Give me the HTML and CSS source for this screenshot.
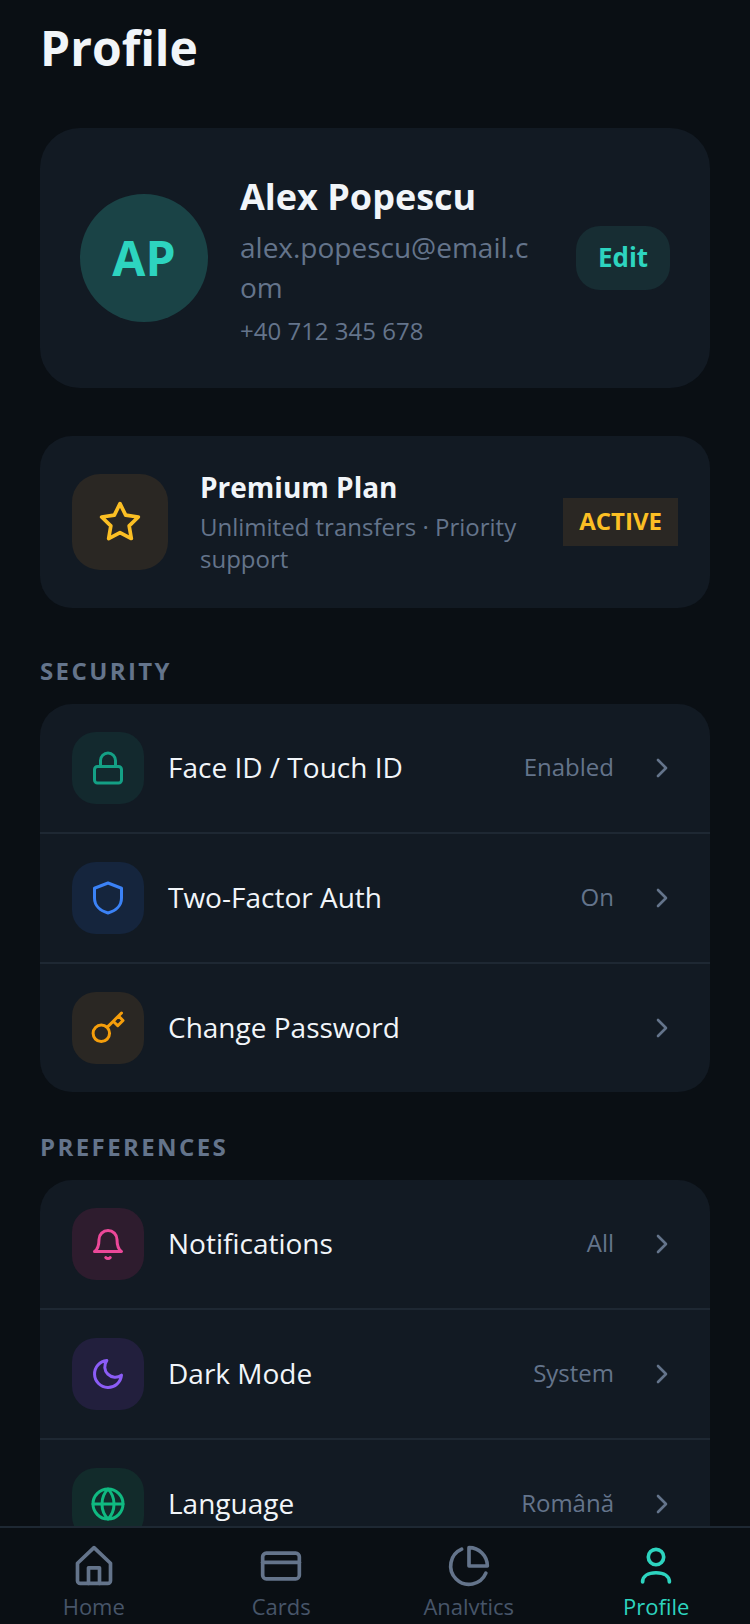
FILE: index.html
```html
<!DOCTYPE html>
<html lang="en">
<head>
    <meta charset="UTF-8">
    <meta name="viewport" content="width=device-width, initial-scale=1.0">
    <title>Profile</title>
    <link rel="stylesheet" href="styles.css">
</head>
<body>
    <div class="app">
        <main class="content">
            <h1 class="page-title">Profile</h1>

            <section class="profile-card">
                <div class="avatar">AP</div>
                <div class="profile-info">
                    <div class="profile-name">Alex Popescu</div>
                    <div class="profile-email">alex.popescu@email.com</div>
                    <div class="profile-phone">+40 712 345 678</div>
                </div>
                <button class="edit-button">Edit</button>
            </section>

            <section class="plan-card">
                <div class="plan-icon">
                    <svg width="44" height="44" viewBox="0 0 24 24" fill="none" stroke="#fbbf24" stroke-width="2" stroke-linecap="round" stroke-linejoin="round"><path d="M12 2l3.090 6.260L22 9.270l-5 4.870 1.180 6.880L12 17.770l-6.180 3.250L7 14.140 2 9.270l6.910-1.010L12 2z"/></svg>
                </div>
                <div class="plan-info">
                    <div class="plan-name">Premium Plan</div>
                    <div class="plan-desc">Unlimited transfers · Priority support</div>
                </div>
                <div class="plan-badge">ACTIVE</div>
            </section>

            <h2 class="section-label">SECURITY</h2>
            <section class="list-group">
                <div class="list-row">
                    <div class="row-icon icon-teal">
                        <svg width="36" height="36" viewBox="0 0 24 24" fill="none" stroke="currentColor" stroke-width="2" stroke-linecap="round" stroke-linejoin="round"><rect x="3" y="11" width="18" height="11" rx="2"/><path d="M7 11V7a5 5 0 0 1 10 0v4"/></svg>
                    </div>
                    <span class="row-title">Face ID / Touch ID</span>
                    <span class="row-value">Enabled</span>
                    <svg class="chevron" width="24" height="24" viewBox="0 0 24 24" fill="none" stroke="currentColor" stroke-width="2.6" stroke-linecap="round" stroke-linejoin="round"><path d="M9 4l8 8-8 8"/></svg>
                </div>
                <div class="list-row">
                    <div class="row-icon icon-blue">
                        <svg width="36" height="36" viewBox="0 0 24 24" fill="none" stroke="currentColor" stroke-width="2" stroke-linecap="round" stroke-linejoin="round"><path d="M12 2l9 3.500V12c0 5-3.800 8.600-9 10-5.200-1.400-9-5-9-10V5.500z"/></svg>
                    </div>
                    <span class="row-title">Two-Factor Auth</span>
                    <span class="row-value">On</span>
                    <svg class="chevron" width="24" height="24" viewBox="0 0 24 24" fill="none" stroke="currentColor" stroke-width="2.6" stroke-linecap="round" stroke-linejoin="round"><path d="M9 4l8 8-8 8"/></svg>
                </div>
                <div class="list-row">
                    <div class="row-icon icon-amber">
                        <svg width="36" height="36" viewBox="0 0 24 24" fill="none" stroke="currentColor" stroke-width="2" stroke-linecap="round" stroke-linejoin="round"><path d="M21 2l-2 2m-7.610 7.610a5.500 5.500 0 1 1-7.778 7.778 5.500 5.500 0 0 1 7.777-7.777zm0 0L15.500 7.500m0 0l3 3L22 7l-3-3m-3.500 3.500L19 4"/></svg>
                    </div>
                    <span class="row-title">Change Password</span>
                    <svg class="chevron" width="24" height="24" viewBox="0 0 24 24" fill="none" stroke="currentColor" stroke-width="2.6" stroke-linecap="round" stroke-linejoin="round"><path d="M9 4l8 8-8 8"/></svg>
                </div>
            </section>

            <h2 class="section-label">PREFERENCES</h2>
            <section class="list-group">
                <div class="list-row">
                    <div class="row-icon icon-pink">
                        <svg width="36" height="36" viewBox="0 0 24 24" fill="none" stroke="currentColor" stroke-width="2" stroke-linecap="round" stroke-linejoin="round"><path d="M6 9a6 6 0 0 1 12 0c0 5 1.500 7 3 8H3c1.500-1 3-3 3-8z"/><path d="M10.500 21a2 2 0 0 0 3 0"/></svg>
                    </div>
                    <span class="row-title">Notifications</span>
                    <span class="row-value">All</span>
                    <svg class="chevron" width="24" height="24" viewBox="0 0 24 24" fill="none" stroke="currentColor" stroke-width="2.6" stroke-linecap="round" stroke-linejoin="round"><path d="M9 4l8 8-8 8"/></svg>
                </div>
                <div class="list-row">
                    <div class="row-icon icon-purple">
                        <svg width="36" height="36" viewBox="0 0 24 24" fill="none" stroke="currentColor" stroke-width="2" stroke-linecap="round" stroke-linejoin="round"><path d="M21 12.790A9 9 0 1 1 11.210 3 7 7 0 0 0 21 12.790z"/></svg>
                    </div>
                    <span class="row-title">Dark Mode</span>
                    <span class="row-value">System</span>
                    <svg class="chevron" width="24" height="24" viewBox="0 0 24 24" fill="none" stroke="currentColor" stroke-width="2.6" stroke-linecap="round" stroke-linejoin="round"><path d="M9 4l8 8-8 8"/></svg>
                </div>
                <div class="list-row">
                    <div class="row-icon icon-green">
                        <svg width="36" height="36" viewBox="0 0 24 24" fill="none" stroke="currentColor" stroke-width="2" stroke-linecap="round" stroke-linejoin="round"><circle cx="12" cy="12" r="10"/><path d="M2 12h20"/><path d="M12 2c3 3 4 6.500 4 10s-1 7-4 10c-3-3-4-6.500-4-10s1-7 4-10z"/></svg>
                    </div>
                    <span class="row-title">Language</span>
                    <span class="row-value">Română</span>
                    <svg class="chevron" width="24" height="24" viewBox="0 0 24 24" fill="none" stroke="currentColor" stroke-width="2.6" stroke-linecap="round" stroke-linejoin="round"><path d="M9 4l8 8-8 8"/></svg>
                </div>
            </section>
        </main>

        <nav class="tab-bar">
            <div class="tab">
                <svg width="44" height="44" viewBox="0 0 24 24" fill="none" stroke="currentColor" stroke-width="2" stroke-linecap="round" stroke-linejoin="round"><path d="M3 10.500L12 2l9 8.500V20a1.500 1.500 0 0 1-1.500 1.500h-15A1.500 1.500 0 0 1 3 20z"/><path d="M9 21.500V13h6v8.500"/></svg>
                <span class="tab-label">Home</span>
            </div>
            <div class="tab">
                <svg width="44" height="44" viewBox="0 0 24 24" fill="none" stroke="currentColor" stroke-width="2" stroke-linecap="round" stroke-linejoin="round"><rect x="2" y="5" width="20" height="14" rx="2"/><path d="M2 10h20"/></svg>
                <span class="tab-label">Cards</span>
            </div>
            <div class="tab">
                <svg width="44" height="44" viewBox="0 0 24 24" fill="none" stroke="currentColor" stroke-width="2" stroke-linecap="round" stroke-linejoin="round"><path d="M21.200 15.900A10 10 0 1 1 8 2.800"/><path d="M12 2a10 10 0 0 1 10 10H12z"/></svg>
                <span class="tab-label">Analytics</span>
            </div>
            <div class="tab tab-active">
                <svg width="44" height="44" viewBox="0 0 24 24" fill="none" stroke="currentColor" stroke-width="2" stroke-linecap="round" stroke-linejoin="round"><circle cx="12" cy="7.100" r="4.200"/><path d="M4.700 20.700c0-3.200 3-5 7.300-5s7.300 1.800 7.300 5"/></svg>
                <span class="tab-label">Profile</span>
            </div>
        </nav>
    </div>
</body>
</html>
```

FILE: styles.css
```css
* {
    box-sizing: border-box;
}

body {
    margin: 0;
    background: #0a0f14;
    font-family: "Open Sans", "Noto Sans", sans-serif;
}

.app {
    display: flex;
    flex-direction: column;
    height: 1624px;
    overflow: hidden;
}

.content {
    flex: 1;
    min-height: 0;
    overflow: hidden;
    padding: 16px 40px 0;
}

.page-title {
    margin: 0 0 48px;
    color: #f1f5f9;
    font-size: 48px;
    font-weight: 700;
    line-height: 64px;
}

.profile-card {
    display: flex;
    align-items: center;
    height: 260px;
    padding: 0 40px;
    margin-bottom: 48px;
    background: #121a23;
    border-radius: 40px;
}

.avatar {
    display: flex;
    justify-content: center;
    align-items: center;
    flex-shrink: 0;
    width: 128px;
    height: 128px;
    margin-right: 32px;
    padding-bottom: 2px;
    border-radius: 50%;
    background: #1a4346;
    color: #2dd4bf;
    font-size: 48px;
    font-weight: 700;
}

.profile-info {
    flex: 1;
    min-width: 0;
    margin-right: 32px;
}

.profile-name {
    color: #f1f5f9;
    font-size: 36px;
    font-weight: 700;
    line-height: 48px;
    margin-bottom: 6px;
    padding-top: 8px;
}

.profile-email {
    color: #64748b;
    font-size: 28px;
    line-height: 40px;
    overflow-wrap: anywhere;
    margin-bottom: 4px;
}

.profile-phone {
    color: #64748b;
    font-size: 24px;
    line-height: 40px;
}

.edit-button {
    flex-shrink: 0;
    width: 94px;
    height: 64px;
    padding: 0 0 2px;
    border: none;
    border-radius: 24px;
    background: #172d33;
    color: #2dd4bf;
    font-family: inherit;
    font-size: 26px;
    font-weight: 700;
}

.plan-card {
    display: flex;
    align-items: center;
    height: 172px;
    padding: 0 32px;
    margin-bottom: 48px;
    background: #121a23;
    border-radius: 32px;
}

.plan-icon {
    display: flex;
    justify-content: center;
    align-items: center;
    flex-shrink: 0;
    width: 96px;
    height: 96px;
    margin-right: 32px;
    border-radius: 28px;
    background: #2a2723;
}

.plan-info {
    flex: 1;
    min-width: 0;
}

.plan-name {
    color: #f1f5f9;
    font-size: 28px;
    font-weight: 700;
    line-height: 40px;
    margin-top: -2px;
    margin-bottom: 4px;
}

.plan-desc {
    color: #64748b;
    font-size: 24px;
    line-height: 32px;
}

.plan-badge {
    flex-shrink: 0;
    margin-left: 24px;
    padding: 0 16px;
    height: 48px;
    line-height: 46px;
    background: #2a2723;
    color: #fbbf24;
    font-size: 24px;
    font-weight: 700;
}

.section-label {
    margin: 0 0 18px;
    color: #64748b;
    font-size: 24px;
    font-weight: 700;
    line-height: 30px;
    letter-spacing: 2.4px;
}

.list-group {
    margin-bottom: 40px;
    background: #121a23;
    border-radius: 32px;
    overflow: hidden;
}

.list-row {
    display: flex;
    align-items: center;
    height: 130px;
    padding: 0 37px 0 32px;
    border-bottom: 2px solid #1e2833;
}

.list-row:last-child {
    border-bottom: none;
    height: 128px;
}

.row-icon {
    display: flex;
    justify-content: center;
    align-items: center;
    flex-shrink: 0;
    width: 72px;
    height: 72px;
    margin-right: 24px;
    border-radius: 24px;
}

.icon-teal { background: #13292e; color: #14a085; }
.icon-blue { background: #15253d; color: #3b82f6; }
.icon-amber { background: #2a2723; color: #f59e0b; }
.icon-pink { background: #2e1c2e; color: #ec4899; }
.icon-purple { background: #221f3d; color: #8b5cf6; }
.icon-green { background: #122b2b; color: #10b981; }

.row-title {
    flex: 1;
    color: #f1f5f9;
    font-size: 28px;
    line-height: 40px;
    margin-top: -2px;
}

.row-value {
    color: #64748b;
    font-size: 24px;
    line-height: 32px;
    margin-top: -2px;
    margin-right: 35px;
}

.chevron {
    flex-shrink: 0;
    color: #64748b;
}

.tab-bar {
    display: flex;
    flex-shrink: 0;
    height: 98px;
    background: #0a0f14;
    border-top: 2px solid #1e2833;
}

.tab {
    display: flex;
    flex-direction: column;
    align-items: center;
    flex: 1;
    padding-top: 16px;
    height: 87px;
    overflow: hidden;
    color: #64748b;
}

.tab svg {
    flex-shrink: 0;
}

.tab-label {
    flex-shrink: 0;
    margin-top: 3px;
    color: #475569;
    font-size: 22px;
    line-height: 30px;
}

.tab-active,
.tab-active .tab-label {
    color: #2dd4bf;
}
```
